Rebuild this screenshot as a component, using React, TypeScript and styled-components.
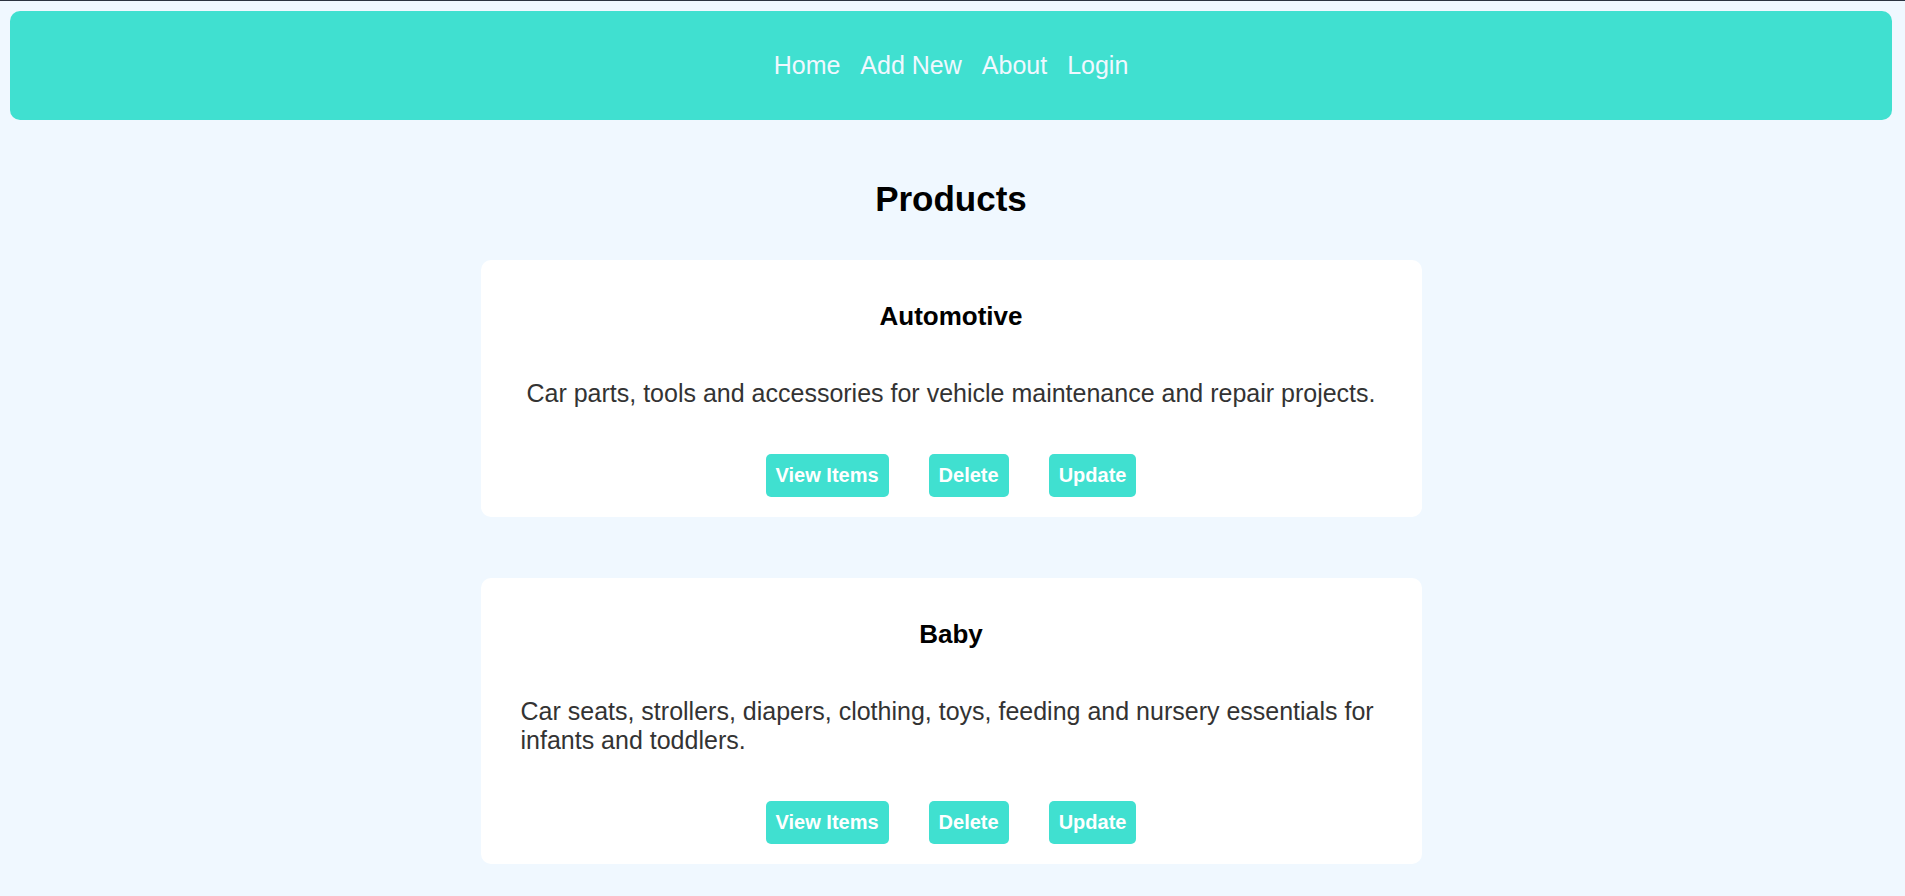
import styled, { createGlobalStyle } from "styled-components";

const GlobalStyle = createGlobalStyle`
  html {
    border-top: 1px solid #2b3340;
  }
  body {
    margin: 0;
    background-color: aliceblue;
    font-family: "Liberation Sans", Arial, sans-serif;
  }
`;

const Page = styled.div`
  padding: 10px 13px 10px 10px;
`;

const NavBar = styled.nav`
  height: 109px;
  background-color: turquoise;
  border-radius: 10px;
  display: flex;
  justify-content: center;
  align-items: center;
  gap: 20px;
`;

const NavLink = styled.a`
  color: aliceblue;
  font-size: 25px;
  text-decoration: none;
  cursor: pointer;
`;

const Main = styled.main`
  display: flex;
  flex-direction: column;
  align-items: center;
`;

const Heading = styled.h1`
  margin: 59px 0 41px;
  font-size: 35px;
  font-weight: bold;
  color: #000;
`;

const Cards = styled.div`
  display: flex;
  flex-direction: column;
  gap: 61px;
  width: 941px;
`;

const Card = styled.div`
  background-color: #fff;
  border-radius: 10px;
  padding: 41px 40px 20px;
  display: flex;
  flex-direction: column;
  align-items: center;
`;

const Title = styled.h3`
  margin: 0 0 47px;
  font-size: 26px;
  font-weight: bold;
  color: #000;
`;

const Description = styled.p`
  margin: 0 0 46px;
  font-size: 25px;
  color: #333;
`;

const Actions = styled.div`
  display: flex;
  gap: 40px;
`;

const ActionButton = styled.button`
  border: none;
  border-radius: 5px;
  background-color: turquoise;
  color: #fff;
  font-family: "Liberation Sans", Arial, sans-serif;
  font-size: 20px;
  font-weight: bold;
  line-height: 23px;
  padding: 10px;
  cursor: pointer;
`;

interface ICategory {
  id: string;
  name: string;
  description: string;
}

const categories: ICategory[] = [
  {
    id: "automotive",
    name: "Automotive",
    description:
      "Car parts, tools and accessories for vehicle maintenance and repair projects.",
  },
  {
    id: "baby",
    name: "Baby",
    description:
      "Car seats, strollers, diapers, clothing, toys, feeding and nursery essentials for infants and toddlers.",
  },
];

function App() {
  return (
    <>
      <GlobalStyle />
      <Page>
        <NavBar>
          <NavLink>Home</NavLink>
          <NavLink>Add New</NavLink>
          <NavLink>About</NavLink>
          <NavLink>Login</NavLink>
        </NavBar>
        <Main>
          <Heading>Products</Heading>
          <Cards>
            {categories.map((category) => (
              <Card key={category.id}>
                <Title>{category.name}</Title>
                <Description>{category.description}</Description>
                <Actions>
                  <ActionButton>View Items</ActionButton>
                  <ActionButton>Delete</ActionButton>
                  <ActionButton>Update</ActionButton>
                </Actions>
              </Card>
            ))}
          </Cards>
        </Main>
      </Page>
    </>
  );
}

export default App;
